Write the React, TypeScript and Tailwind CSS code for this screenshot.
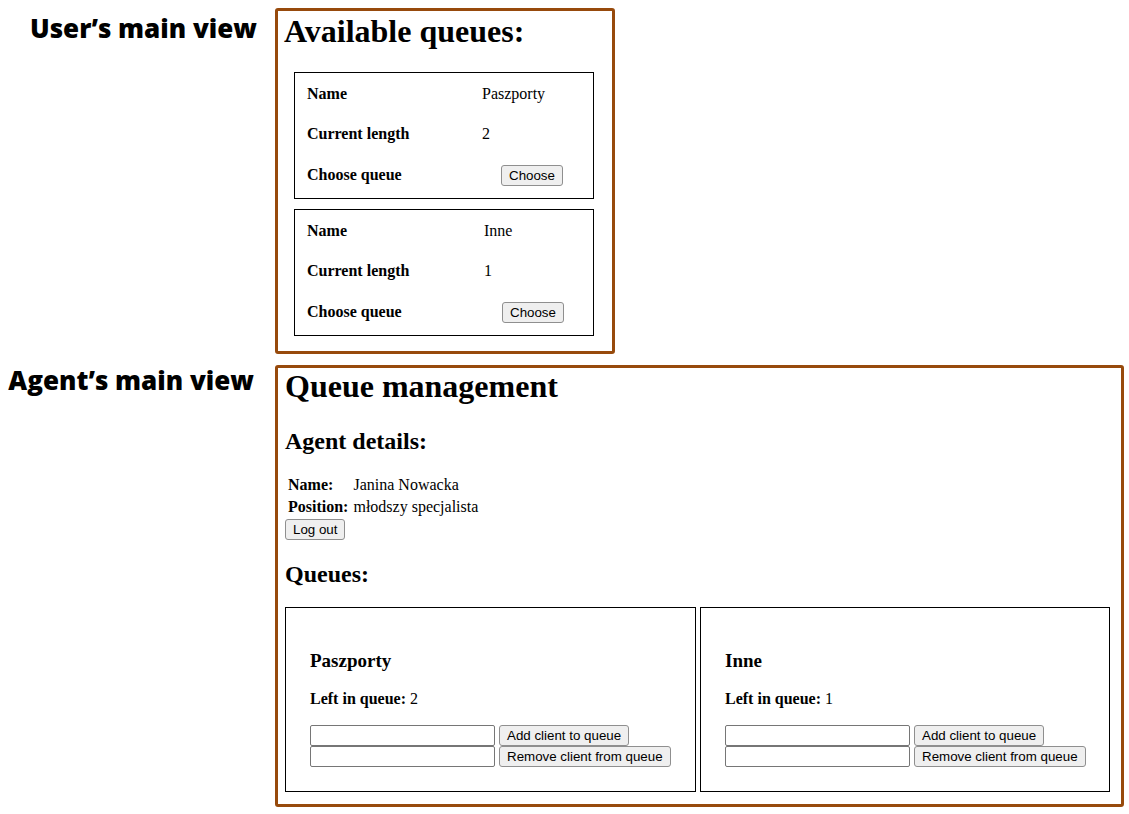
import type { ReactNode } from 'react'

const serif = 'font-["Liberation_Serif",serif]'

function NativeButton({ children }: { children: ReactNode }) {
  return (
    <button className='h-[21px] shrink-0 whitespace-nowrap rounded-[3px] border border-[#8f8f8f] bg-[#efefef] px-[7px] font-["Liberation_Sans",sans-serif] text-[13.33px] leading-[15px] text-black'>
      {children}
    </button>
  )
}

function ViewLabel({ children, className }: { children: ReactNode; className: string }) {
  return (
    <div className={`w-[275px] shrink-0 text-right font-["Open_Sans",sans-serif] text-[26px] font-extrabold leading-[31px] text-black ${className}`}>
      {children}
    </div>
  )
}

type UserQueue = { name: string; length: number; valueX: string; buttonX: string }

const userQueues: UserQueue[] = [
  { name: 'Paszporty', length: 2, valueX: 'pl-0', buttonX: 'pl-[19px]' },
  { name: 'Inne', length: 1, valueX: 'pl-[2px]', buttonX: 'pl-[20px]' },
]

function UserQueueCard({ queue }: { queue: UserQueue }) {
  return (
    <div className="mt-[10px] w-[300px] border border-black pt-[1px] pb-[3px] first:mt-0">
      <div className="flex h-[40px] items-center pl-[12px]">
        <span className="w-[175px] font-bold">Name</span>
        <span className={queue.valueX}>{queue.name}</span>
      </div>
      <div className="flex h-[40px] items-center pl-[12px]">
        <span className="w-[175px] font-bold">Current length</span>
        <span className={queue.valueX}>{queue.length}</span>
      </div>
      <div className="flex h-[41px] items-center pl-[12px]">
        <span className="w-[175px] font-bold">Choose queue</span>
        <span className={queue.buttonX}>
          <NativeButton>Choose</NativeButton>
        </span>
      </div>
    </div>
  )
}

function AgentQueueCard({ name, left, width }: { name: string; left: number; width: string }) {
  return (
    <div className={`${width} shrink-0 border border-black px-[24px] pt-[42px] pb-[24px]`}>
      <h3 className="text-[19px] font-bold leading-[22px]">{name}</h3>
      <p className="mt-[18px] leading-[18px]">
        <span className="font-bold">Left in queue:</span> {left}
      </p>
      <div className="mt-[17px] flex flex-col">
        <div className="flex items-center gap-[4px]">
          <input className="h-[21px] w-[185px] shrink-0 rounded-[2px] border border-[#767676] bg-white" />
          <NativeButton>Add client to queue</NativeButton>
        </div>
        <div className="flex items-center gap-[4px]">
          <input className="h-[21px] w-[185px] shrink-0 rounded-[2px] border border-[#767676] bg-white" />
          <NativeButton>Remove client from queue</NativeButton>
        </div>
      </div>
    </div>
  )
}

export default function App() {
  return (
    <div className={`min-h-[814px] w-[1129px] bg-white pt-[8px] text-[16px] text-black ${serif}`}>
      <div className="flex">
        <ViewLabel className="mt-[5px] pr-[18px]">User’s main view</ViewLabel>
        <div className="h-[346px] w-[340px] rounded-[3px] border-[3px] border-[#974a0c] pt-[2px] pl-[6px]">
          <h1 className="text-[32px] font-bold leading-[37px]">Available queues:</h1>
          <div className="mt-[22px] ml-[10px]">
            {userQueues.map((q) => (
              <UserQueueCard key={q.name} queue={q} />
            ))}
          </div>
        </div>
      </div>

      <div className="mt-[11px] flex">
        <ViewLabel className="mt-0 pr-[21px]">Agent’s main view</ViewLabel>
        <div className="h-[442px] w-[849px] rounded-[3px] border-[3px] border-[#974a0c] pl-[7px]">
          <h1 className="text-[32px] font-bold leading-[37px]">Queue management</h1>
          <h2 className="mt-[22px] text-[24px] font-bold leading-[28px]">Agent details:</h2>
          <div className="mt-[19px] ml-[3px] grid w-fit grid-cols-[auto_auto] gap-x-[5px] leading-[22px]">
            <span className="font-bold">Name:</span>
            <span>Janina Nowacka</span>
            <span className="font-bold">Position:</span>
            <span>młodszy specjalista</span>
          </div>
          <div className="mt-[1px] flex">
            <NativeButton>Log out</NativeButton>
          </div>
          <h2 className="mt-[20px] text-[24px] font-bold leading-[28px]">Queues:</h2>
          <div className="mt-[19px] flex gap-[4px]">
            <AgentQueueCard name="Paszporty" left={2} width="w-[411px]" />
            <AgentQueueCard name="Inne" left={1} width="w-[410px]" />
          </div>
        </div>
      </div>
    </div>
  )
}
